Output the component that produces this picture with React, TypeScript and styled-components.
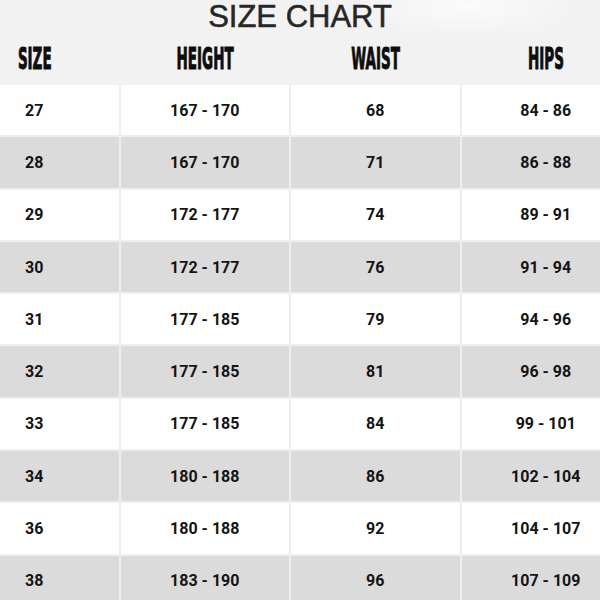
import React from "react";
import styled, { createGlobalStyle } from "styled-components";

const rows = [
  ["27", "167 - 170", "68", "84 - 86"],
  ["28", "167 - 170", "71", "86 - 88"],
  ["29", "172 - 177", "74", "89 - 91"],
  ["30", "172 - 177", "76", "91 - 94"],
  ["31", "177 - 185", "79", "94 - 96"],
  ["32", "177 - 185", "81", "96 - 98"],
  ["33", "177 - 185", "84", "99 - 101"],
  ["34", "180 - 188", "86", "102 - 104"],
  ["36", "180 - 188", "92", "104 - 107"],
  ["38", "183 - 190", "96", "107 - 109"],
];

const labels = ["SIZE", "HEIGHT", "WAIST", "HIPS"];

const App: React.FC = () => {
  return (
    <>
      <GlobalStyle />
      <Page>
        <Header>
          <Title>SIZE CHART</Title>
          <LabelRow>
            {labels.map((l) => (
              <Label key={l}>
                <LabelText>{l}</LabelText>
              </Label>
            ))}
          </LabelRow>
        </Header>
        <Body>
          {rows.map((r, i) =>
            r.map((v, j) => (
              <Cell key={i + "-" + j} shaded={i % 2 === 1}>
                {v}
              </Cell>
            ))
          )}
        </Body>
      </Page>
    </>
  );
};

export default App;

const GlobalStyle = createGlobalStyle`
  html, body {
    margin: 0;
    padding: 0;
    background: #f2f2f2;
  }
`;

const Page = styled.div`
  width: 600px;
  height: 600px;
  overflow: hidden;
  background: #f2f2f2;
`;

const Header = styled.div`
  height: 85px;
  display: flex;
  flex-direction: column;
  background: radial-gradient(ellipse 110px 30px at 78% 8%, #fbfbfb, #f2f2f2);
`;

const Title = styled.h1`
  margin: 0;
  height: 36px;
  line-height: 34px;
  text-align: center;
  font-family: "Liberation Sans", Arial, sans-serif;
  font-weight: 400;
  font-size: 31px;
  color: #262626;
  -webkit-text-stroke: 0.5px #262626;
`;

const LabelRow = styled.div`
  flex: 1;
  display: grid;
  grid-template-columns: repeat(4, 168.5px);
  column-gap: 2px;
  margin-left: -50px;
  align-items: center;
  padding-bottom: 4px;
`;

const Label = styled.div`
  display: flex;
  justify-content: center;
`;

const LabelText = styled.span`
  display: inline-block;
  font-family: "DejaVu Sans", "Liberation Sans", sans-serif;
  font-stretch: condensed;
  font-weight: 700;
  font-size: 30px;
  line-height: 32px;
  color: #0d0d0d;
  -webkit-text-stroke: 1px #0d0d0d;
  transform: scaleX(0.5);
`;

const Body = styled.div`
  display: grid;
  grid-template-columns: repeat(4, 168.5px);
  grid-auto-rows: 50.3px;
  gap: 2px;
  margin-left: -50px;
  background: #eeeeee;
`;

const Cell = styled.div<{ shaded: boolean }>`
  display: flex;
  align-items: center;
  justify-content: center;
  background: ${(p) => (p.shaded ? "#dbdbdb" : "#ffffff")};
  font-family: Roboto, "Liberation Sans", sans-serif;
  font-weight: 700;
  font-size: 16px;
  color: #141414;
`;
